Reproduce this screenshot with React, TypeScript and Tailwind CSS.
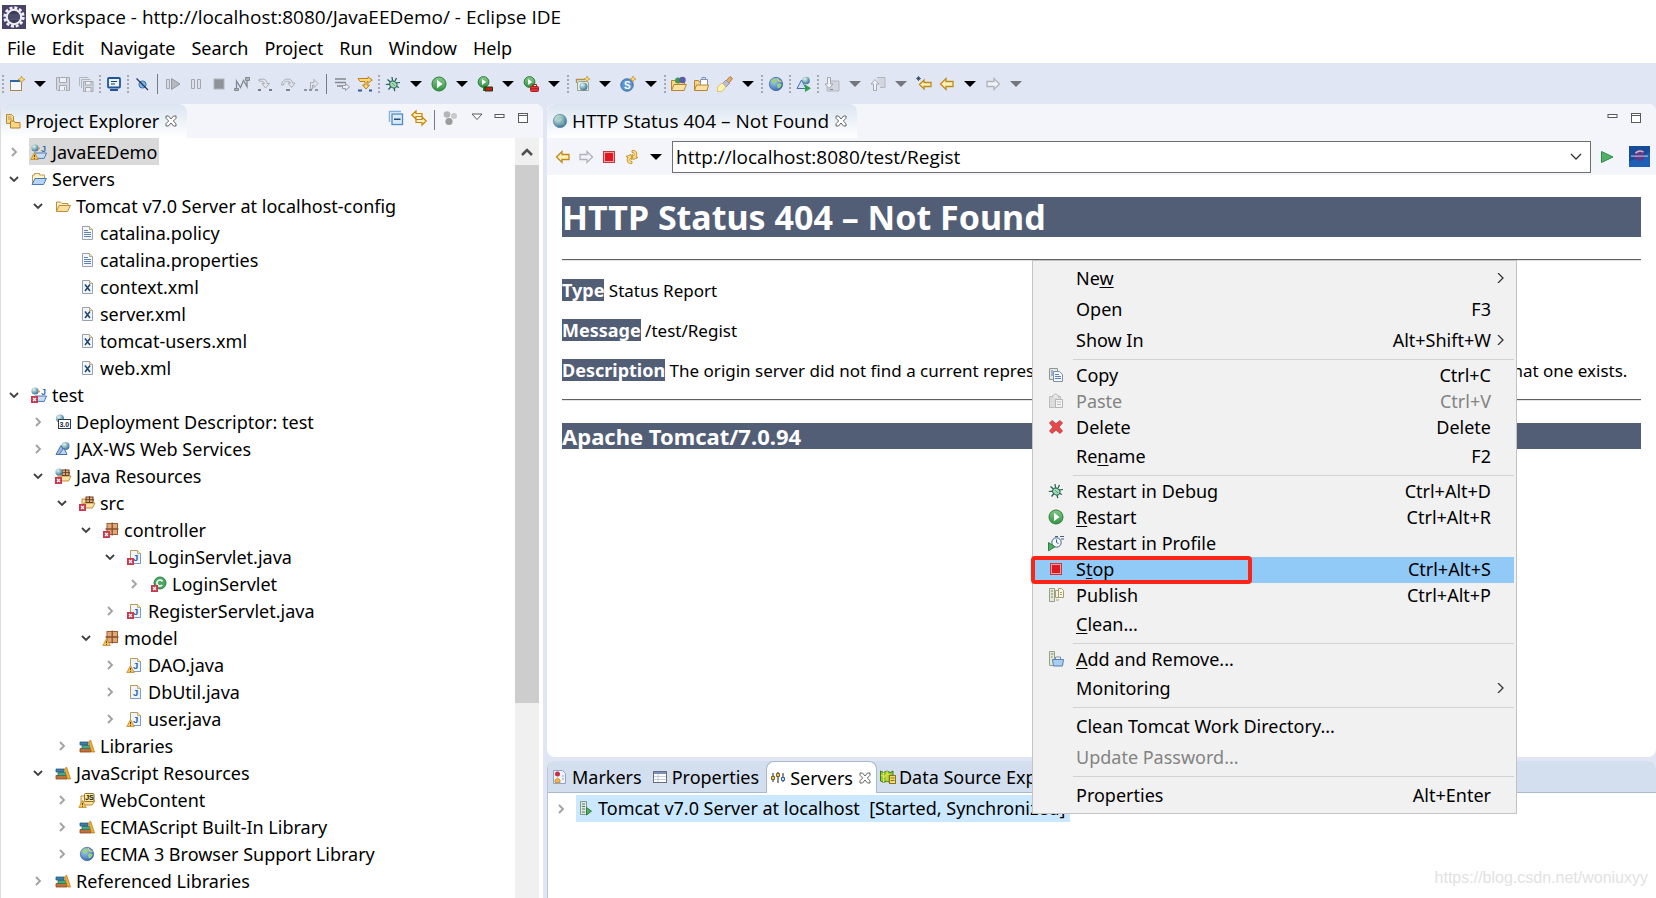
import { useState } from "react";
import type { ReactNode } from "react";

const errorMark = (
  <g>
    <rect x="0" y="9" width="7" height="7" fill="#c8384e" />
    <path d="M2 11l3 3M5 11l-3 3" stroke="#fff" strokeWidth="1.1" />
  </g>
);

const warnMark = (
  <g>
    <path d="M3.5 8.5L7.3 15.5H-.2z" fill="#f6c35c" stroke="#c08a2a" strokeWidth=".8" />
    <path d="M3.5 10.8v2.2M3.5 13.8v1" stroke="#6b4500" strokeWidth="1" />
  </g>
);

const project = (
  <g>
    <circle cx="4" cy="4" r="3.6" fill="url(#globe)" />
    <path d="M7 4.5h2" stroke="#d99a5b" strokeWidth="1.4" />
    <text x="10" y="7.6" fontSize="9" fontWeight="bold" fill="#3c6ea8" fontFamily="Liberation Sans">J</text>
    <path d="M4 9h11.5l-2.3 5.4H4z" fill="#c9def5" stroke="#4a7ab5" />
  </g>
);

const packageBox = (
  <g>
    <rect x="4" y="1.5" width="10.5" height="11" fill="#dfa978" stroke="#9a5e34" />
    <path d="M9.2 .5v13M2.5 7h13" stroke="#8a4f2c" strokeWidth="1.3" />
  </g>
);

const srcFolder = (
  <g>
    <path d="M3 12V4h4l1 1.5h7" fill="#f7dfa4" stroke="#c08a3a" />
    <path d="M3 13l2-5h11l-2.5 5z" fill="#fbe2a2" stroke="#c08a3a" />
    <rect x="7" y="2" width="7" height="5.5" fill="#e0b080" stroke="#6a3f20" />
    <path d="M10.5 1v7M6 4.7h9" stroke="#6a3f20" />
  </g>
);

const javaFile = (
  <g>
    <path d="M3.5 1.5h7l3 3v10h-10z" fill="#eef5fd" stroke="#b59a5a" />
    <path d="M10.5 1.5v3h3" fill="#f6e7b8" stroke="#b59a5a" strokeWidth=".8" />
    <path d="M13.5 5v9.5h-10" fill="none" stroke="#7a9cc6" />
    <text x="6" y="12.2" fontSize="9.5" fontWeight="bold" fill="#2c62a8" fontFamily="Liberation Sans">J</text>
  </g>
);

const sparkle = <path d="M13 0l.9 2.1L16 3l-2.1.9L13 6l-.9-2.1L10 3l2.1-.9z" fill="#f9dd7a" stroke="#b98a1e" strokeWidth=".6" />;

const icons: Record<string, ReactNode> = {
  eclipse: (
    <>
      <rect width="16" height="16" fill="#4a4168" />
      <circle cx="8" cy="8" r="6.2" fill="none" stroke="#f4f2fa" strokeWidth="1.8" strokeDasharray="2 1.25" />
      <circle cx="8" cy="8" r="4.8" fill="#3b3b55" stroke="#f0edf8" strokeWidth="1.4" />
      <path d="M4.6 6.6h6.8M4 8h8M4.6 9.4h6.8" stroke="#5c5c80" strokeWidth=".7" />
    </>
  ),
  newWizard: (
    <>
      <rect x="1.5" y="4.5" width="11" height="10" fill="#f2f7fd" stroke="#a58a4a" />
      <path d="M1 5h10" stroke="#2f66a8" strokeWidth="2" />
      <path d="M12.5 0l1.1 2.4L16 3.5l-2.4 1.1-1.1 2.4-1.1-2.4L9 3.5l2.4-1.1z" fill="#f9dd7a" stroke="#b98a1e" strokeWidth=".7" />
    </>
  ),
  save: (
    <>
      <path d="M1.5 1.5h13v13h-12l-1-1z" fill="#d4d7df" stroke="#a6a9b0" />
      <path d="M4.5 1.5h7v5h-7zM4.5 14.5v-5h7v5" fill="#eef0f5" stroke="#a6a9b0" />
      <path d="M9.5 11v3" stroke="#a6a9b0" />
    </>
  ),
  saveAll: (
    <>
      <path d="M1.5 10V1.5h9" fill="none" stroke="#b3b6bd" />
      <path d="M3.5 12V3.5h9" fill="none" stroke="#b3b6bd" />
      <path d="M5.5 5.5h9.5v10h-9.5z" fill="#d4d7df" stroke="#a6a9b0" />
      <path d="M7.5 5.5H13V9H7.5zM7.5 15.5v-4H13v4" fill="#eef0f5" stroke="#a6a9b0" />
    </>
  ),
  monitor: (
    <>
      <rect x="2" y="2" width="12" height="9.5" rx="1" fill="#e9f3fc" stroke="#23549a" strokeWidth="1.8" />
      <path d="M5 5.5h6M5 8h4" stroke="#1f3f70" />
      <path d="M4 14h8" stroke="#23549a" strokeWidth="2" />
    </>
  ),
  skip: (
    <>
      <circle cx="8.5" cy="8.5" r="3.6" fill="#7db2e0" stroke="#3c74ae" />
      <path d="M2.5 2.5L14 14" stroke="#243a66" strokeWidth="1.3" />
    </>
  ),
  resume: (
    <>
      <path d="M1.5 3.5h3v9h-3z" fill="#d7dae2" stroke="#a3a6ad" />
      <path d="M6.5 2.5L15 8l-8.5 5.5z" fill="#b5b8bf" stroke="#96999f" />
    </>
  ),
  pause: <path d="M3.5 3.5h3v9h-3zM9.5 3.5h3v9h-3z" fill="#dfe2ea" stroke="#a3a6ad" />,
  stopGray: <rect x="3" y="3" width="10" height="10" fill="#8f9299" stroke="#b0b3ba" />,
  disconnect: (
    <>
      <path d="M2.5 13V5l4 6.5 3-7 3.5 6V3" fill="none" stroke="#85888f" strokeWidth="1.3" />
      <path d="M.5 12.5h4v2h-4zM11.5 1.5h4v3h-4z" fill="#b0b3ba" stroke="#85888f" />
    </>
  ),
  stepInto: (
    <>
      <path d="M2 3.5c5-1 8 0 8 4h2.5L8.5 12 5 7.5h2.5C7.5 6 5 5 2 5z" fill="#e4e6ee" stroke="#a9acb4" />
      <path d="M1 14h3M12 14h3" stroke="#777b84" strokeWidth="1.8" />
    </>
  ),
  stepOver: (
    <>
      <path d="M1.5 9C2 2 12 1 12.5 7H15l-3.5 4.5L8 7h2.5C9 4 4 5 3.5 9z" fill="#e4e6ee" stroke="#a9acb4" />
      <path d="M6 14h4" stroke="#777b84" strokeWidth="1.8" />
    </>
  ),
  stepReturn: (
    <>
      <path d="M7.5 13V6.5H11v-3l4 4-4 4V9H9.5v4z" fill="#e4e6ee" stroke="#a9acb4" />
      <path d="M1 14h3M6 14h3M12 14h3" stroke="#777b84" strokeWidth="1.6" />
    </>
  ),
  dropFrame: (
    <>
      <path d="M1 3h11M1 6.5h11M3 10h6" stroke="#85888f" strokeWidth="1.6" />
      <path d="M8.5 9.5h3v-2l4 3.5-4 3.5v-2h-3z" fill="#eceef4" stroke="#9699a0" />
    </>
  ),
  stepFilters: (
    <>
      <path d="M1 2.5h10V.8L15.2 4 11 7.2V5.5h-1V9h2.5L9 13 5.5 9H8V5.5H3z" fill="#fbd978" stroke="#c08018" />
      <path d="M1 14.5h4M12 14.5h3" stroke="#2f5f9f" strokeWidth="1.8" />
    </>
  ),
  bug: (
    <>
      <path d="M7 1l.5 3.5M2.5 3.5l3 2.5M11.5 2L10 5M.8 8.5L5 8.2M11 7l4-.5M3.5 13.5l2.5-3M14 11.5l-3-1.3M9 12l.8 3.2" stroke="#1f5a50" strokeWidth="1.2" />
      <ellipse cx="8.3" cy="8.5" rx="3.8" ry="3.2" transform="rotate(35 8.3 8.5)" fill="#a5d8b0" stroke="#1f6a58" />
      <path d="M7 7l3 3" stroke="#5ba47a" />
    </>
  ),
  run: (
    <>
      <circle cx="8" cy="8" r="7" fill="url(#green)" stroke="#2f7d3b" />
      <path d="M6 3.8L11.6 8 6 12.2z" fill="#fff" />
    </>
  ),
  coverage: (
    <>
      <circle cx="6.5" cy="6" r="5.4" fill="url(#green)" stroke="#2f7d3b" />
      <path d="M5 3l4.3 3L5 9z" fill="#fff" />
      <path d="M6 10h4v5H6z" fill="#138a1c" />
      <path d="M8 11h7.5v4H8z" fill="#c81a1a" stroke="#1d3d10" />
    </>
  ),
  external: (
    <>
      <circle cx="6.5" cy="6" r="5.4" fill="url(#green)" stroke="#2f7d3b" />
      <path d="M5 3l4.3 3L5 9z" fill="#fff" />
      <rect x="7.5" y="10.5" width="8" height="5" rx="1" fill="#e13a3a" stroke="#a81c1c" />
      <path d="M9.5 10.5v-2h4v2M8 12.8h7" fill="none" stroke="#a81c1c" />
    </>
  ),
  newServer: (
    <>
      <path d="M2 3.5h9M2.5 3v4" fill="none" stroke="#b89048" strokeWidth="1.4" />
      <path d="M3.5 14.5v-8l2-1h7l2 1v8z" fill="#e9efe6" stroke="#9aa58c" />
      <circle cx="9.5" cy="10.5" r="4" fill="url(#globe)" />
      {sparkle}
    </>
  ),
  newServlet: (
    <>
      <circle cx="7" cy="9" r="6.2" fill="#5d94cf" stroke="#3a6da6" />
      <text x="4" y="12.6" fontSize="10" fontWeight="bold" fill="#fff" fontFamily="Liberation Sans">S</text>
      {sparkle}
    </>
  ),
  openType: (
    <>
      <path d="M.5 14V4.5h4l1 1.5h8V14z" fill="#f6d488" stroke="#b98432" />
      <circle cx="7" cy="4.5" r="3" fill="#3d9a50" />
      <circle cx="11.5" cy="4" r="3.2" fill="#5b5aa8" />
      <path d="M.5 14.5l2.5-6h12.5l-2.5 6z" fill="#fbe2a2" stroke="#b98432" />
    </>
  ),
  openTask: (
    <>
      <path d="M.5 14V4.5h4l1 1.5h8V14z" fill="#f6d488" stroke="#b98432" />
      <path d="M6.5 3.5h7v6h-7z" fill="#fff" stroke="#7f92b5" />
      <path d="M8 3V1.5h3.5V3" fill="none" stroke="#7f92b5" />
      <path d="M.5 14.5l2-5.5h12L13 14.5z" fill="#fbe2a2" stroke="#b98432" />
    </>
  ),
  search: (
    <>
      <path d="M9 5l4-4.5 2.5 2L12 7z" fill="#e3b06a" stroke="#a0662a" strokeWidth=".8" />
      <path d="M5 8l4-4 3.5 3.5L9 11z" fill="#bcbccd" stroke="#8b8ba5" strokeWidth=".8" />
      <path d="M.5 15.5V11L5 7l4 4-4 4.5z" fill="#fdf3b5" stroke="#d9bb55" strokeWidth=".8" />
    </>
  ),
  globe: (
    <>
      <circle cx="8" cy="8" r="6.7" fill="url(#globe)" stroke="#54809f" strokeWidth=".6" />
      <path d="M4 5c2-2.5 4-2 5-1s-1 2-2 3-2 1-3-2zM9 9c2-.5 4 .5 3.5 2.5S9 12 9 9z" fill="#7cbf87" opacity=".5" />
    </>
  ),
  browser: (
    <>
      <circle cx="8" cy="8" r="6.7" fill="url(#earth)" stroke="#2a5794" strokeWidth=".6" />
      <path d="M3 4.5C5 2 7 2.5 8.5 3.5s-.5 3-2 3.5-2 1-3.5-2.5zM9 8.5c2-1.5 4.5-1 4.5.5S10 13.5 9.500 12z" fill="#9ad27a" />
      <path d="M9 2.5l2 2.5 2.5.5" fill="none" stroke="#f4e06a" strokeWidth="1.2" />
    </>
  ),
  webService: (
    <>
      <circle cx="10.5" cy="5" r="4" fill="url(#globe)" />
      <path d="M1 13.5l5-9 5 9z" fill="#9ebbe4" stroke="#4570ae" />
      <path d="M4 13.5L9 7l3 6.5z" fill="#c5d8f2" stroke="#4570ae" />
    </>
  ),
  webServiceRun: (
    <>
      <circle cx="10" cy="4.5" r="3.8" fill="url(#globe)" />
      <path d="M1 12.5L5.5 4l4.5 8.5z" fill="#cfdff4" stroke="#4570ae" />
      <path d="M9 8.5l6 3.7-6 3.8z" fill="#2fa04a" />
    </>
  ),
  nextNote: (
    <>
      <path d="M6 5h9v10H3v-4" fill="#d3d6df" stroke="#b3b6bf" />
      <path d="M3.5 1.5h3V8H9l-4 4.5L1 8h2.5z" fill="#f2f3f8" stroke="#a3a6ad" />
      <path d="M6 13.5h3" stroke="#85888f" />
    </>
  ),
  prevNote: (
    <>
      <path d="M7 1.5h8v10h-5" fill="#d3d6df" stroke="#b3b6bf" />
      <path d="M3.5 14.5h3V8H9L5 3.5 1 8h2.5z" fill="#f2f3f8" stroke="#a3a6ad" />
    </>
  ),
  lastEdit: (
    <>
      <path d="M3.5 8.5L8 4v2.5h7v4H8V13z" fill="#fdf0b8" stroke="#bf8a1c" strokeWidth="1.3" />
      <path d="M2.5 0v5M0 2.5h5M1 1l3 3M4 1L1 4" stroke="#31415f" strokeWidth=".8" />
    </>
  ),
  back: <path d="M1.5 8L7 2.5v3h7v5H7v3z" fill="#fdf0b8" stroke="#bf8a1c" strokeWidth="1.3" />,
  forward: <path d="M14.5 8L9 2.5v3H2v5h7v3z" fill="#f2f3f8" stroke="#b0b3ba" strokeWidth="1.3" />,
  stop: (
    <>
      <rect x="2.5" y="2.5" width="11" height="11" fill="#f3a0a4" stroke="#c33a3e" />
      <rect x="4" y="4" width="8" height="8" fill="#e01824" />
    </>
  ),
  refresh: (
    <>
      <path d="M8 1.5c4-1 6 3 4 6l2 1-5 2-1-5 1.7 1C11 5 10 3.5 8 3.5z" fill="#fbdf8b" stroke="#bf8a1c" strokeWidth=".9" />
      <path d="M8 14.5c-4 1-6-3-4-6l-2-1 5-2 1 5-1.7-1C5 11 6 12.5 8 12.5z" fill="#fbdf8b" stroke="#bf8a1c" strokeWidth=".9" />
    </>
  ),
  go: <path d="M2.5 2.5L14 8 2.5 13.5z" fill="#53b06a" stroke="#2f8a48" />,
  browserLogo: (
    <>
      <rect width="16" height="16" fill="#1c5fb4" />
      <path d="M0 0h16v5L0 12z" fill="#174c98" />
      <circle cx="8" cy="7.5" r="4" fill="#5a3b86" />
      <path d="M5 5.5a4.3 4.3 0 016-.8" fill="none" stroke="#e0a9c0" strokeWidth="1.3" />
      <path d="M1.5 7.7h13" stroke="#d9d4f0" strokeWidth=".7" />
    </>
  ),
  explorer: (
    <>
      <path d="M1.5 10.5v-9h5l2 2v7z" fill="#f3d891" stroke="#b58b3c" />
      <path d="M3 4h3M3 6h4" stroke="#b58b3c" strokeWidth=".8" />
      <path d="M5.5 15V8H9l1 1.5h5V15z" fill="#fbd684" stroke="#b5802c" />
    </>
  ),
  collapse: (
    <>
      <path d="M1.5 12V1.5H13" fill="none" stroke="#84b1db" strokeWidth="1.4" />
      <rect x="4" y="4" width="10.5" height="10.5" fill="#dbeaf8" stroke="#4f8cc4" strokeWidth="1.3" />
      <path d="M6 9.2h6.5" stroke="#234b7c" strokeWidth="1.5" />
    </>
  ),
  link: (
    <>
      <path d="M.8 5L5 1v2.5h6v3H5V9z" fill="#fdf0b8" stroke="#c8860a" strokeWidth="1.2" />
      <path d="M15.2 11L11 7v2.5H5v3h6V15z" fill="#fdf0b8" stroke="#c8860a" strokeWidth="1.2" />
    </>
  ),
  focus: (
    <>
      <circle cx="5" cy="4.5" r="3.3" fill="#b5b5b5" />
      <circle cx="12" cy="6" r="3" fill="#c9c9c9" />
      <circle cx="7" cy="11.5" r="3.6" fill="#9c9c9c" />
    </>
  ),
  viewMenu: <path d="M3 4h10L8 9.5z" fill="#fff" stroke="#5a5a5a" />,
  minimize: <rect x="3" y="4.5" width="9" height="3" fill="#fff" stroke="#5a5a5a" />,
  maximize: (
    <>
      <rect x="3.5" y="3.5" width="9" height="9" fill="#fff" stroke="#5a5a5a" />
      <path d="M3.5 5.5h9" stroke="#5a5a5a" />
    </>
  ),
  close: <path d="M3 3h2.5L8 6l2.5-3H13v2.3L10.3 8l2.7 2.7V13h-2.5L8 10l-2.5 3H3v-2.3L5.7 8 3 5.3z" fill="#fff" stroke="#555" strokeWidth=".9" />,
  projectWarn: <>{project}{warnMark}</>,
  projectError: <>{project}{errorMark}</>,
  projectFolder: (
    <>
      <path d="M1.5 12V4h2V2.5h5V4h5v3" fill="#fdf3cf" stroke="#c09a58" />
      <path d="M1 13.5l3-6h11.5l-3 6z" fill="#b7d4f4" stroke="#4a7ab5" />
    </>
  ),
  folder: (
    <>
      <path d="M1.5 13V4h4L7 5.5h6V8" fill="#fdf0c8" stroke="#bf8d3c" />
      <path d="M1.5 13.5L4 7.5h11.5l-3 6z" fill="#fbdf9b" stroke="#bf8d3c" />
    </>
  ),
  text: (
    <>
      <path d="M3.5 1.5h7l3 3v10h-10z" fill="#f3f8fe" stroke="#9aa0ae" />
      <path d="M10.5 1.5v3h3" fill="#f6e7b8" stroke="#b59a5a" strokeWidth=".8" />
      <path d="M5 5.5h4M5 7.5h7M5 9.5h7M5 11.5h7" stroke="#5c82b8" />
    </>
  ),
  xml: (
    <>
      <path d="M3.5 1.5h7l3 3v10h-10z" fill="#eff6fd" stroke="#9aa0ae" />
      <path d="M10.5 1.5v3h3" fill="#f6e7b8" stroke="#b59a5a" strokeWidth=".8" />
      <path d="M6 5.5l5 6.5M11 5.5L6 12" stroke="#1e4170" strokeWidth="1.5" />
    </>
  ),
  descriptor: (
    <>
      <circle cx="5" cy="4.5" r="4" fill="url(#globe)" />
      <rect x="3.5" y="5.5" width="12" height="9" fill="#fff" stroke="#2b3d52" />
      <text x="4.4" y="12.8" fontSize="7" fontWeight="bold" fill="#15263a" fontFamily="Liberation Sans">3.0</text>
    </>
  ),
  javaRes: <>{srcFolder}<circle cx="4" cy="4" r="3.6" fill="url(#globe)" />{errorMark}</>,
  src: <>{srcFolder}{errorMark}</>,
  packageError: <>{packageBox}{errorMark}</>,
  packageWarn: <>{packageBox}{warnMark}</>,
  javaError: <>{javaFile}{errorMark}</>,
  javaWarn: <>{javaFile}{warnMark}</>,
  java: javaFile,
  classError: (
    <>
      <circle cx="9" cy="7" r="6" fill="#48a860" stroke="#2c7f42" />
      <path d="M11.5 5.5a3 3 0 10-.3 3.5" fill="none" stroke="#fff" strokeWidth="1.6" />
      {errorMark}
    </>
  ),
  library: (
    <>
      <path d="M1 10.5h11V14H1z" fill="#c0703a" stroke="#8a4a20" strokeWidth=".8" />
      <path d="M3 7.5h8v3H3z" fill="#4ba884" stroke="#2a7a5a" strokeWidth=".8" />
      <path d="M1 4h8v3H1z" fill="#3c7fa8" stroke="#245a80" strokeWidth=".8" />
      <path d="M9.5 4l2-2 4 12h-3z" fill="#f2b23a" stroke="#b87a14" strokeWidth=".8" />
    </>
  ),
  webContent: (
    <>
      <path d="M2 13V4h4l1 1.5" fill="#fdf0c8" stroke="#bf8d3c" />
      <path d="M3 13l2-4h11l-3 4z" fill="#fbdf9b" stroke="#bf8d3c" />
      <rect x="5.5" y="1.5" width="9.5" height="8" rx="1" fill="#fbe89c" stroke="#8a7030" />
      <text x="6.2" y="8.3" fontSize="7" fontWeight="bold" fill="#20180a" fontFamily="Liberation Sans">JS</text>
      {warnMark}
    </>
  ),
  markers: (
    <>
      <path d="M1.5 1.5h9l3 3v10h-12z" fill="#eef4fc" stroke="#8fa3c2" />
      <circle cx="5.5" cy="5" r="2.5" fill="#cc2f44" />
      <path d="M3 13.5V11l2.5-2L8 11v2.5z" fill="#f6b54a" stroke="#b97a1c" strokeWidth=".7" />
      <path d="M10 7h2M10 10h2" stroke="#8fa3c2" />
    </>
  ),
  properties: (
    <>
      <rect x="1.5" y="2.5" width="13" height="11" fill="#fff" stroke="#6a6f80" />
      <path d="M2 4h12" stroke="#7c8fb8" strokeWidth="2" />
      <path d="M6 5v8M2 7.5h12M2 10.5h12" stroke="#b6bfd2" strokeWidth=".8" />
    </>
  ),
  servers: (
    <>
      <path d="M3 3v9M8 2v11M13 3v9" stroke="#39465c" strokeWidth="1.2" />
      <path d="M1.5 6.5h3v3h-3z" fill="#f0c95a" stroke="#7a6420" />
      <path d="M6.5 3.5h3v3h-3z" fill="#f0c95a" stroke="#7a6420" />
      <path d="M11.5 7.5h3v3h-3z" fill="#cfe0f4" stroke="#3a5f92" />
    </>
  ),
  dataSource: (
    <>
      <path d="M.5 2l3 1.5L7 2l3 1.5L13 2v10l-3 1.5L7 12l-3.5 1.5-3-1.5z" fill="#8dc83e" stroke="#3e7a1c" />
      <path d="M3.5 3.5v10M7 2v10M1 6l3 2 4-3 3 2" stroke="#e6e040" strokeWidth="1.2" fill="none" />
      <rect x="9.5" y="6.5" width="6" height="8" fill="#f3dc6a" stroke="#8a7420" />
      <path d="M10.5 9h4M10.5 11.5h4" stroke="#8a7420" />
    </>
  ),
  serverRunning: (
    <>
      <path d="M2.5 1.5h6v13h-6z" fill="#dfe9e2" stroke="#7f978c" />
      <path d="M4 4h3M4 6.5h3M4 9h3M4 12h3" stroke="#54796a" />
      <path d="M8.5 7.5l5 3.7-5 3.8z" fill="#4fae62" stroke="#2d8040" />
    </>
  ),
  copy: (
    <>
      <path d="M1.5 1.5h8v11h-8z" fill="#dfe8ee" stroke="#8e9a80" />
      <path d="M3 4h2M3 6h2M3 8h2" stroke="#5c82b8" />
      <path d="M5.5 4.5h6l3 3v7h-9z" fill="#f3f8fe" stroke="#7f8fae" />
      <path d="M7 7.5h4M7 9.5h6M7 11.5h6" stroke="#5c82b8" />
    </>
  ),
  paste: (
    <>
      <path d="M1.5 3.5h11v11h-11z" fill="#dcdcdc" stroke="#bdbdbd" />
      <path d="M4.5 4.5v-2h1l1-1.5h2l1 1.5h1v2" fill="#e9e9e9" stroke="#bdbdbd" />
      <path d="M7.5 6.5h7v8h-7z" fill="#f4f4f4" stroke="#b5b5b5" />
      <path d="M9 9h4M9 11.5h4" stroke="#bdbdbd" />
    </>
  ),
  delete: <path d="M1.5 4L4 1.5l4 3.3 4-3.3L14.5 4 11 8l3.5 4-2.5 2.5L8 11l-4 3.5L1.5 12 5 8z" fill="#e8484c" stroke="#c0393d" strokeWidth=".8" />,
  profile: (
    <>
      <circle cx="8.5" cy="7.5" r="4.7" fill="#f3f8fe" stroke="#3c5f8e" />
      <path d="M8.5 4.5v3l2 1M7 1.5h3M12 1.5h4M13 4h3" stroke="#3c5f8e" fill="none" />
      <path d="M.5 7.5L7 11.8l-6.5 4z" fill="#4fae62" stroke="#2d8040" />
    </>
  ),
  publish: (
    <>
      <path d="M1.5 1.5h5v13h-5z" fill="#e3e9d8" stroke="#97a184" />
      <path d="M3 4h2M3 7h2M3 10h2" stroke="#73876a" />
      <path d="M7.5 3.5h4v7h-4z" fill="#f7f3de" stroke="#a89d6c" />
      <path d="M10.5 1.5h3l2 2v7h-5z" fill="#fbf8e8" stroke="#a89d6c" />
      <path d="M12 5.5h2M12 7.5h2M8 13h3" stroke="#a89d6c" />
    </>
  ),
  addRemove: (
    <>
      <path d="M1.5 .5h5v14h-5z" fill="#e3e9d8" stroke="#97a184" />
      <path d="M3 3h2.5M3 6h1.5" stroke="#73876a" />
      <path d="M4.5 8.5h11l-1 6.5h-9z" fill="#a9cdf2" stroke="#5580b4" />
      <path d="M7.5 8V6h5v2" fill="#f4f8fc" stroke="#7f8fae" />
    </>
  ),
};

function Icon({ name, className = "size-4" }: { name: string; className?: string }) {
  return (
    <svg viewBox="0 0 16 16" fill="none" className={`${className} shrink-0 overflow-visible`} aria-hidden="true">
      {icons[name]}
    </svg>
  );
}

function Chevron({ open, dark }: { open?: boolean; dark?: boolean }) {
  return (
    <svg viewBox="0 0 10 10" fill="none" className="size-2.5 shrink-0" aria-hidden="true">
      {open ? (
        <path d="M1 3l4 4 4-4" stroke="#404040" strokeWidth="1.8" />
      ) : (
        <path d={dark ? "M3 0l5 5-5 5" : "M3 1l4 4-4 4"} stroke={dark ? "#333" : "#a0a0a0"} strokeWidth={dark ? 1.3 : 1.8} />
      )}
    </svg>
  );
}

// "|" is a dotted grip, "/" a solid separator, "v" and "w" the enabled and disabled drop arrows
const toolbar =
  "| newWizard v save saveAll | monitor | skip / resume pause stopGray disconnect stepInto stepOver stepReturn / dropFrame stepFilters | bug v run v coverage v external v | newServer v newServlet v | openType openTask search v | browser | webServiceRun | nextNote w prevNote w lastEdit back v forward w".split(" ");

function DropArrow({ disabled }: { disabled?: boolean }) {
  return (
    <svg viewBox="0 0 12 6" className="h-1.5 w-3" aria-hidden="true">
      <path d="M0 0h12L6 6z" fill={disabled ? "#74767c" : "#000"} />
    </svg>
  );
}

function Toolbar() {
  return (
    <div className="flex h-[41px] shrink-0 items-center bg-[#e1e6f5]">
      {toolbar.map((item, i) => {
        if (item === "|") return <span key={i} className="flex w-[5px] justify-center"><i className="h-[18px] border-l-2 border-dotted border-[#a5a8b0]" /></span>;
        if (item === "/") return <span key={i} className="flex w-2 justify-center"><i className="h-5 w-px bg-[#777b85]" /></span>;
        const isDrop = item === "v" || item === "w";
        return (
          <button key={i} aria-label={isDrop ? "More" : item} className="flex h-6 w-[23px] items-center justify-center">
            {isDrop ? <DropArrow disabled={item === "w"} /> : <Icon name={item} />}
          </button>
        );
      })}
    </div>
  );
}

type Node = { level: number; label: string; icon: string; open?: boolean; leaf?: boolean };

const tree: Node[] = [
  { level: 0, label: "JavaEEDemo", icon: "projectWarn" },
  { level: 0, label: "Servers", icon: "projectFolder", open: true },
  { level: 1, label: "Tomcat v7.0 Server at localhost-config", icon: "folder", open: true },
  { level: 2, label: "catalina.policy", icon: "text", leaf: true },
  { level: 2, label: "catalina.properties", icon: "text", leaf: true },
  { level: 2, label: "context.xml", icon: "xml", leaf: true },
  { level: 2, label: "server.xml", icon: "xml", leaf: true },
  { level: 2, label: "tomcat-users.xml", icon: "xml", leaf: true },
  { level: 2, label: "web.xml", icon: "xml", leaf: true },
  { level: 0, label: "test", icon: "projectError", open: true },
  { level: 1, label: "Deployment Descriptor: test", icon: "descriptor" },
  { level: 1, label: "JAX-WS Web Services", icon: "webService" },
  { level: 1, label: "Java Resources", icon: "javaRes", open: true },
  { level: 2, label: "src", icon: "src", open: true },
  { level: 3, label: "controller", icon: "packageError", open: true },
  { level: 4, label: "LoginServlet.java", icon: "javaError", open: true },
  { level: 5, label: "LoginServlet", icon: "classError" },
  { level: 4, label: "RegisterServlet.java", icon: "javaError" },
  { level: 3, label: "model", icon: "packageWarn", open: true },
  { level: 4, label: "DAO.java", icon: "javaWarn" },
  { level: 4, label: "DbUtil.java", icon: "java" },
  { level: 4, label: "user.java", icon: "javaWarn" },
  { level: 2, label: "Libraries", icon: "library" },
  { level: 1, label: "JavaScript Resources", icon: "library", open: true },
  { level: 2, label: "WebContent", icon: "webContent" },
  { level: 2, label: "ECMAScript Built-In Library", icon: "library" },
  { level: 2, label: "ECMA 3 Browser Support Library", icon: "browser" },
  { level: 1, label: "Referenced Libraries", icon: "library" },
];

function ProjectExplorer() {
  const [selected, setSelected] = useState("JavaEEDemo");

  return (
    <section className="flex w-[543px] shrink-0 flex-col overflow-hidden rounded-t-lg border-l border-[#dcdcdc] bg-white">
      <header className="flex h-[34px] shrink-0 bg-[#f4f5fb]">
        <div className="flex items-center gap-1 rounded-tr-lg bg-linear-to-b from-[#dbe5f1] to-white pr-2 pl-1">
          <Icon name="explorer" />
          <h2>Project Explorer</h2>
          <button aria-label="Close" className="flex"><Icon name="close" /></button>
        </div>
        <div className="ml-auto flex items-start gap-[7px] pt-1.5 pr-3">
          <Icon name="collapse" />
          <Icon name="link" />
          <i className="h-5 w-px bg-[#777b85]" />
          <Icon name="focus" className="mr-1 size-4" />
          <Icon name="viewMenu" />
          <Icon name="minimize" />
          <Icon name="maximize" />
        </div>
      </header>
      <div className="flex min-h-0 flex-1">
        <ul className="min-w-0 flex-1 overflow-hidden">
          {tree.map((n, i) => (
            <li key={i} className="flex h-[27px] items-center gap-1.5" style={{ paddingLeft: 4 + n.level * 24 }}>
              <span className="flex w-[18px] justify-center">{!n.leaf && <Chevron open={n.open} />}</span>
              <button
                onClick={() => setSelected(n.label)}
                className={`flex h-full items-center gap-[5px] px-0.5 whitespace-nowrap ${selected === n.label ? "bg-[#d9d9d9]" : ""}`}
              >
                <Icon name={n.icon} />
                {n.label}
              </button>
            </li>
          ))}
        </ul>
        <div className="mr-1 flex w-6 flex-col bg-[#f0f0f0]">
          <button aria-label="Scroll up" className="flex h-[27px] items-center justify-center">
            <svg viewBox="0 0 12 10" fill="none" className="h-2.5 w-3"><path d="M1 8l5-5 5 5" stroke="#505050" strokeWidth="2.5" /></svg>
          </button>
          <div className="h-[538px] bg-[#cdcdcd]" />
        </div>
      </div>
    </section>
  );
}

function BrowserView() {
  return (
    <section className="flex h-[653px] flex-col overflow-hidden rounded-lg bg-white">
      <header className="flex h-[34px] shrink-0 justify-between bg-[#f4f5fb]">
        <div className="flex items-center gap-1 rounded-t-lg bg-linear-to-b from-[#dbe5f1] to-white pr-2 pl-[5px]">
          <Icon name="globe" />
          <h2 className="font-['Open_Sans',sans-serif] text-[19px]">HTTP Status 404 – Not Found</h2>
          <button aria-label="Close" className="flex"><Icon name="close" /></button>
        </div>
        <div className="flex items-start gap-[7px] pt-1.5 pr-3">
          <Icon name="minimize" />
          <Icon name="maximize" />
        </div>
      </header>
      <form className="flex h-[37px] shrink-0 items-center bg-[#f4f5fb] pr-1.5 pl-2" onSubmit={(e) => e.preventDefault()}>
        <div className="flex items-center gap-[7px]">
          <Icon name="back" />
          <Icon name="forward" />
          <Icon name="stop" />
          <Icon name="refresh" />
        </div>
        <button aria-label="Refresh options" className="mx-2.5 flex"><DropArrow /></button>
        <div className="flex h-8 flex-1 items-center border border-[#707070] bg-white pr-2">
          <input aria-label="Address" defaultValue="http://localhost:8080/test/Regist" className="min-w-0 flex-1 px-[3px] font-['Open_Sans',sans-serif] text-[19px] outline-none" />
          <svg viewBox="0 0 12 8" fill="none" className="h-2 w-3"><path d="M1 1l5 5 5-5" stroke="#333" strokeWidth="1.3" /></svg>
        </div>
        <button aria-label="Go" className="mr-3.5 ml-2 flex"><Icon name="go" /></button>
        <Icon name="browserLogo" className="size-[21px]" />
      </form>
      <article className="px-[15px] pt-[22px] text-[17px] leading-[22px]">
        <h1 className="mb-[22px] bg-[#525d76] text-[34px] leading-[40px] font-bold text-white">HTTP Status 404 – Not Found</h1>
        <hr className="mb-[18px] border-t border-b border-t-[#606060] border-b-[#e4e4e4]" />
        <div className="flex flex-col gap-[17px] whitespace-nowrap">
          <p><Tag>Type</Tag> Status Report</p>
          <p><Tag>Message</Tag> /test/Regist</p>
          <p><Tag>Description</Tag> The origin server did not find a current representation for the target resource or is not willing to disclose that one exists.</p>
        </div>
        <hr className="mt-[17px] mb-[22px] border-t border-b border-t-[#606060] border-b-[#e4e4e4]" />
        <h3 className="bg-[#525d76] text-[22px] leading-[26px] font-bold text-white">Apache Tomcat/7.0.94</h3>
      </article>
    </section>
  );
}

function Tag({ children }: { children: string }) {
  return <b className="inline-block bg-[#525d76] text-[18px] leading-[22px] font-bold text-white">{children}</b>;
}

function ServersView() {
  return (
    <section className="mt-1 flex flex-1 flex-col overflow-hidden rounded-t-lg border-l border-[#b9c6d8] bg-white">
      <header className="flex h-8 shrink-0 border-b border-[#a9b8cd] bg-[#d3dfee]">
        <button className="flex items-center gap-1 pr-2.5 pl-1"><Icon name="markers" />Markers</button>
        <button className="flex items-center gap-1 pr-[7px]"><Icon name="properties" />Properties</button>
        <div className="-mb-px flex items-center gap-1 rounded-t-lg border-x border-t border-[#a9b8cd] bg-white px-[3px]">
          <Icon name="servers" />
          <h2>Servers</h2>
          <button aria-label="Close" className="flex"><Icon name="close" /></button>
        </div>
        <button className="flex items-center gap-[3px] pl-[3px] whitespace-nowrap"><Icon name="dataSource" />Data Source Explorer</button>
      </header>
      <div className="mt-0.5 flex h-[27px] items-center pl-2">
        <Chevron />
        <button className="ml-2.5 flex h-full items-center gap-1 bg-[#cce8ff] pr-1 pb-0.5 pl-0.5 whitespace-pre">
          <Icon name="serverRunning" />
          {"Tomcat v7.0 Server at localhost  [Started, Synchronized]"}
        </button>
      </div>
    </section>
  );
}

type Item = { label: string; icon?: string; keys?: string; sub?: boolean; tall?: boolean; disabled?: boolean; active?: boolean };

// an underscore comes before the letter that is underlined
const menu: Item[][] = [
  [
    { label: "Ne_w", sub: true, tall: true },
    { label: "Open", keys: "F3", tall: true },
    { label: "Show In", keys: "Alt+Shift+W", sub: true, tall: true },
  ],
  [
    { label: "Copy", icon: "copy", keys: "Ctrl+C" },
    { label: "Paste", icon: "paste", keys: "Ctrl+V", disabled: true },
    { label: "Delete", icon: "delete", keys: "Delete" },
    { label: "Re_name", keys: "F2", tall: true },
  ],
  [
    { label: "Restart in Debug", icon: "bug", keys: "Ctrl+Alt+D" },
    { label: "_Restart", icon: "run", keys: "Ctrl+Alt+R" },
    { label: "Restart in Profile", icon: "profile" },
    { label: "S_top", icon: "stop", keys: "Ctrl+Alt+S", active: true },
    { label: "Publish", icon: "publish", keys: "Ctrl+Alt+P" },
    { label: "_Clean...", tall: true },
  ],
  [
    { label: "_Add and Remove...", icon: "addRemove" },
    { label: "Monitorin_g", sub: true, tall: true },
  ],
  [
    { label: "Clean Tomcat Work Directory...", tall: true },
    { label: "Update Password...", tall: true, disabled: true },
  ],
  [{ label: "Properties", keys: "Alt+Enter", tall: true }],
];

function MenuLabel({ text }: { text: string }) {
  const at = text.indexOf("_");
  if (at < 0) return <span>{text}</span>;
  return (
    <span>
      {text.slice(0, at)}
      <u className="underline-offset-2">{text[at + 1]}</u>
      {text.slice(at + 2)}
    </span>
  );
}

function ContextMenu() {
  return (
    <div role="menu" className="absolute top-[260px] left-[1032px] w-[485px] border border-[#c3c3c3] bg-[#f1f1f1] p-0.5">
      {menu.map((group, g) => (
        <div key={g}>
          {g > 0 && <div className="ml-[38px] flex h-[7px] items-center"><hr className="flex-1 border-[#d2d2d2]" /></div>}
          {group.map((item) => (
            <button
              key={item.label}
              role="menuitem"
              disabled={item.disabled}
              className={`relative flex w-full items-center pr-[9px] pb-0.5 pl-[13px] ${item.tall ? "h-[31px]" : "h-[26px]"} ${item.active ? "bg-[#91c9f7]" : ""} ${item.disabled ? "text-[#838383]" : ""}`}
            >
              <span className="flex w-7 shrink-0">{item.icon && <Icon name={item.icon} />}</span>
              <MenuLabel text={item.label} />
              <span className="ml-auto">{item.keys}</span>
              <span className="flex w-3.5 justify-end">{item.sub && <Chevron dark />}</span>
              {item.active && <span className="absolute -top-px -left-1 h-7 w-[221px] rounded border-4 border-[#fb2416]" />}
            </button>
          ))}
        </div>
      ))}
    </div>
  );
}

export default function App() {
  return (
    <div className="relative flex h-screen flex-col overflow-hidden bg-white font-['Noto_Sans',sans-serif] text-[18px] leading-6 text-black">
      <svg className="absolute size-0" aria-hidden="true">
        <defs>
          <radialGradient id="globe" cx=".35" cy=".3" r=".8">
            <stop offset="0" stopColor="#e4f2f4" />
            <stop offset=".5" stopColor="#7fb0b8" />
            <stop offset="1" stopColor="#2f5f96" />
          </radialGradient>
          <radialGradient id="earth" cx=".35" cy=".3" r=".8">
            <stop offset="0" stopColor="#a8d0f0" />
            <stop offset="1" stopColor="#2b62ac" />
          </radialGradient>
          <linearGradient id="green" x1="0" y1="0" x2="0" y2="1">
            <stop offset="0" stopColor="#86c98a" />
            <stop offset="1" stopColor="#2f9440" />
          </linearGradient>
        </defs>
      </svg>
      <div className="flex h-[34px] shrink-0 items-center gap-[5px] pl-0.5">
        <Icon name="eclipse" className="size-6" />
        <h1 className="font-['Open_Sans',sans-serif] text-[19px]">workspace - http://localhost:8080/JavaEEDemo/ - Eclipse IDE</h1>
      </div>
      <nav className="flex h-[29px] shrink-0 items-center gap-4 pb-0.5 pl-[7px]">
        {["File", "Edit", "Navigate", "Search", "Project", "Run", "Window", "Help"].map((m) => (
          <button key={m}>{m}</button>
        ))}
      </nav>
      <Toolbar />
      <main className="flex min-h-0 flex-1 gap-1 bg-[#e1e6f5]">
        <ProjectExplorer />
        <div className="flex min-w-0 flex-1 flex-col">
          <BrowserView />
          <ServersView />
        </div>
      </main>
      <ContextMenu />
      <p className="absolute right-2 bottom-2 font-['Liberation_Sans',sans-serif] text-[16px] text-[#e2e2e2]">https://blog.csdn.net/woniuxyy</p>
    </div>
  );
}
